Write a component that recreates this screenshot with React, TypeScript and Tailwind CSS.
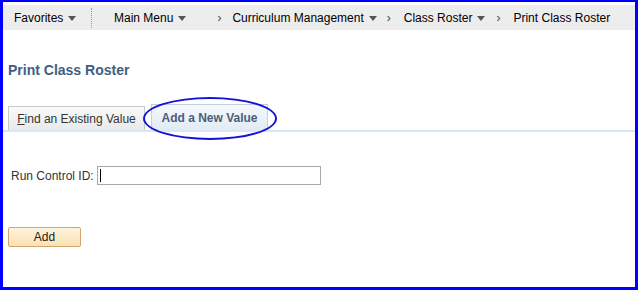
import React from "react";

const Caret = () => (
  <svg width="8" height="5" viewBox="0 0 8 5" className="ml-[5px] mt-[1px]">
    <path d="M0 0 L8 0 L4 5 Z" fill="#555" />
  </svg>
);

export default function App() {
  return (
    <div
      className="w-[638px] h-[290px] bg-white border-[#0000ff] border-l-[3px] border-r-[3px] border-b-[3px] border-t-[2px] box-border overflow-hidden relative"
      style={{ fontFamily: '"Liberation Sans", Arial, sans-serif' }}
    >
      {/* header bar */}
      <div className="mt-[3px] h-[25px] bg-[#ededed] flex items-center text-[12px] text-black">
        <div className="flex items-center pl-[11px] w-[88px]">
          Favorites
          <Caret />
        </div>
        <div className="h-[20px] border-l border-dotted border-[#999]" />
        <div className="flex items-center pl-[22px]">
          Main Menu
          <Caret />
        </div>
        <div className="flex items-center pl-[31px]">
          <span className="text-[#444] mr-[11px]">›</span>
          Curriculum Management
          <Caret />
        </div>
        <div className="flex items-center pl-[10px]">
          <span className="text-[#444] mr-[13px]">›</span>
          Class Roster
          <Caret />
        </div>
        <div className="flex items-center pl-[11px]">
          <span className="text-[#444] mr-[13px]">›</span>
          Print Class Roster
        </div>
      </div>

      {/* title */}
      <div className="pl-[5px] mt-[32px] text-[14px] font-bold text-[#3f5e86] leading-[16px]">
        Print Class Roster
      </div>

      {/* tabs */}
      <div className="mt-[26px] relative">
        <div className="flex items-end pl-[5px] h-[26px]">
          <div className="h-[24px] w-[137px] flex items-center justify-center text-[12px] text-[#333] border border-[#c9c9c9] border-b-0 bg-gradient-to-b from-[#fafafa] to-[#e9e9e9]">
            <span>
              <span className="underline">F</span>ind an Existing Value
            </span>
          </div>
          <div className="ml-[6px] h-[26px] w-[117px] flex items-center justify-center text-[12px] font-bold text-[#4a5f7a] border border-[#c5cfdb] border-b-0 bg-gradient-to-b from-[#f4f8fc] to-[#e2ebf5]">
            Add a New Value
          </div>
        </div>
        <div className="h-[2px] bg-[#d9e7f5]" />
        <div className="absolute left-[140px] top-[-7px] w-[134px] h-[43px] rounded-[50%] border-2 border-[#1212d8] pointer-events-none" />
      </div>

      {/* run control */}
      <div className="mt-[34px] flex items-center pl-[8px] text-[12px] text-[#333]">
        <span>Run Control ID:</span>
        <div className="ml-[3px] w-[224px] h-[19px] border border-[#a9a9a9] bg-white flex items-center pl-[2px]">
          <div className="w-[1px] h-[13px] bg-black" />
        </div>
      </div>

      {/* add button */}
      <div className="mt-[42px] pl-[5px]">
        <div className="w-[73px] h-[20px] rounded-[2px] border border-[#d3a56b] bg-gradient-to-b from-[#fdf3dd] to-[#fce1b3] flex items-center justify-center text-[12px] text-[#222]">
          Add
        </div>
      </div>
    </div>
  );
}
